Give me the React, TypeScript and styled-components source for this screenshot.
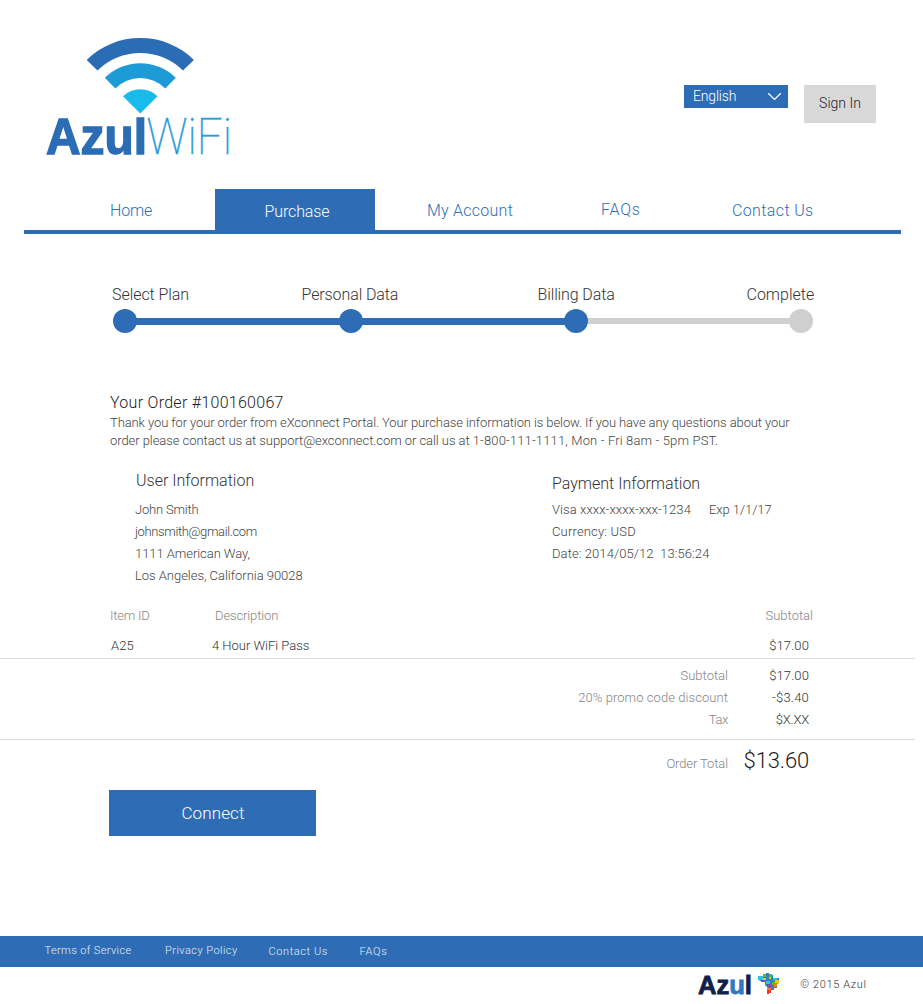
import React from 'react';
import styled, { createGlobalStyle } from 'styled-components';

const BLUE = '#2e6db5';
const GREY = '#cfcfcf';

const GlobalStyle = createGlobalStyle`
  * { box-sizing: border-box; }
  body {
    margin: 0;
    background: #fff;
    color: #333;
    font-family: Roboto, 'Liberation Sans', sans-serif;
    font-weight: 300;
  }
`;

/* Inline label: type size, tracking and tone vary from one use to the next. */
const Text = styled.span<{ $size?: number; $track?: number; $tone?: string }>`
  display: block;
  font-size: ${p => p.$size ?? 13}px;
  letter-spacing: ${p => p.$track ?? 0}px;
  color: ${p => p.$tone ?? 'inherit'};
  white-space: pre;
`;

const Page = styled.div`
  width: 923px;
  height: 1004px;
  display: flex;
  flex-direction: column;
  overflow: hidden;
`;

const Header = styled.header`
  height: 189px;
  padding: 33px 47px 0 42px;
  display: flex;
  justify-content: space-between;
  align-items: flex-start;
`;

const Actions = styled.div`
  display: flex;
  align-items: flex-start;
  gap: 16px;
  padding-top: 52px;
`;

const LanguageSelect = styled.button`
  width: 104px;
  height: 23px;
  padding: 0 6px 1px 9px;
  border: 0;
  display: flex;
  align-items: center;
  justify-content: space-between;
  background: ${BLUE};
  color: #fff;
  font: inherit;
`;

const SignIn = styled.button`
  width: 72px;
  height: 38px;
  padding: 0 0 2px;
  border: 0;
  display: flex;
  align-items: center;
  justify-content: center;
  background: #d8d8d8;
  color: #222;
  font: inherit;
`;

const Nav = styled.nav`
  width: 877px;
  height: 45px;
  margin-left: 24px;
  display: grid;
  grid-template-columns: 191px 160px 190px 112px 1fr;
  border-bottom: 4px solid ${BLUE};
`;

const NavItem = styled.a<{ $active?: boolean; $indent: number; $top?: number }>`
  padding: ${p => p.$top ?? 12}px 0 0 ${p => p.$indent}px;
  line-height: 20px;
  color: ${p => (p.$active ? '#fff' : BLUE)};
  background: ${p => (p.$active ? BLUE : 'transparent')};
`;

const Steps = styled.section`
  padding: 51px 0 0 112px;
`;

const StepLabels = styled.div`
  display: grid;
  grid-template-columns: 189.5px 236px 209px auto;
  line-height: 20px;
`;

const Track = styled.div`
  width: 700px;
  margin: 4px 0 0 1px;
  display: grid;
  grid-template-columns: 24px 202px 24px 201px 24px 201px 24px;
  align-items: center;
`;

const Dot = styled.i<{ $done?: boolean }>`
  position: relative;
  height: 24px;
  border-radius: 50%;
  background: ${p => (p.$done ? BLUE : GREY)};
`;

const Bar = styled.i<{ $done?: boolean }>`
  height: ${p => (p.$done ? 7 : 6)}px;
  margin: 0 -2px;
  background: ${p => (p.$done ? BLUE : GREY)};
`;

const Intro = styled.section`
  margin: 60px 0 0 110px;
  line-height: 18px;
`;

const IntroTitle = styled.h1`
  margin: 0 0 1px;
  font-weight: 300;
  line-height: 20px;
`;

const Info = styled.section`
  margin: 21px 0 0 135px;
  display: grid;
  grid-template-columns: 417px auto;
  align-items: start;
`;

const InfoBlock = styled.div<{ $top?: number }>`
  padding-top: ${p => p.$top ?? 0}px;
  line-height: 22px;
`;

const InfoTitle = styled.h2<{ $gap: number; $indent?: number }>`
  margin: 0 0 ${p => p.$gap}px ${p => p.$indent ?? 0}px;
  font-weight: 300;
  line-height: 20px;
`;

const SplitLine = styled.div<{ $gap?: number }>`
  display: flex;
  gap: ${p => p.$gap ?? 0}px;
`;

const ItemRow = styled.div<{ $left: number; $mid: number; $right: number }>`
  height: 22px;
  padding: 0 ${p => p.$right}px 0 ${p => p.$left}px;
  display: grid;
  grid-template-columns: ${p => p.$mid}px 1fr auto;
  line-height: 22px;
`;

const Items = styled.section`
  padding: 18px 0 1px;
  display: flex;
  flex-direction: column;
  gap: 8px;
`;

const Divider = styled.hr`
  width: 915px;
  height: 1px;
  margin: 0;
  border: 0;
  background: #dcdcdc;
`;

const Totals = styled.section<{ $pad: string }>`
  padding: ${p => p.$pad};
  display: grid;
  grid-template-columns: 728px 81px;
  justify-items: end;
  line-height: 22px;
`;

const GrandTotal = styled.strong`
  font-weight: 300;
  line-height: 16px;
`;

const Connect = styled.button`
  width: 207px;
  height: 46px;
  margin: 15px 0 0 109px;
  padding: 0 0 0 1px;
  border: 0;
  display: flex;
  align-items: center;
  justify-content: center;
  background: ${BLUE};
  color: #fff;
  font: inherit;
`;

const FooterBar = styled.footer`
  height: 31px;
  margin-top: auto;
  padding: 4px 0 0 44.5px;
  display: grid;
  grid-template-columns: 120.5px 103.5px 91px auto;
  line-height: 22px;
  background: ${BLUE};
  color: #e4edf7;
`;

const FooterLink = styled.a<{ $drop?: boolean }>`
  padding-top: ${p => (p.$drop ? 1 : 0)}px;
`;

const FooterBase = styled.div`
  height: 37px;
  padding-right: 56.5px;
  display: flex;
  justify-content: flex-end;
  gap: 18px;
`;

const Copyright = styled.small`
  padding-top: 7px;
  line-height: 22px;
  color: #333;
`;

const Svg = styled.svg`
  display: block;
  flex: none;
`;

const bold = { fontFamily: "'Liberation Sans', Arial, sans-serif", fontWeight: 700 } as const;

function AzulWifiLogo() {
  return (
    <Svg width="204" height="140" viewBox="42 33 204 140" role="img" aria-label="Azul WiFi">
      <path fill="#2b6db5" d="M86.7 60 A76 76 0 0 1 193.9 60 L183 70.4 A61 61 0 0 0 97.5 70.4 Z" />
      <path fill="#1c9bd7" d="M104.8 77.8 A50.3 50.3 0 0 1 175.8 77.8 L165.2 88.4 A35.3 35.3 0 0 0 115.4 88.4 Z" />
      <path fill="#18bbea" d="M123 96.2 A25 25 0 0 1 157.6 96.2 L140.3 113.6 Z" />
      <text x="46" y="154" fontSize="50" fill="#2b6db5" stroke="#2b6db5" strokeWidth="1.4" textLength="101" lengthAdjust="spacingAndGlyphs" {...bold}>Azul</text>
      <text x="146.5" y="154.3" fontSize="50" fill="#2a9ad8" stroke="#2a9ad8" strokeWidth="0.5" textLength="85.5" lengthAdjust="spacingAndGlyphs" fontFamily="Roboto, sans-serif" fontWeight="100">WiFi</text>
    </Svg>
  );
}

function AzulMark() {
  return (
    <Svg width="86" height="36" viewBox="695 967 86 36" role="img" aria-label="Azul">
      <text x="697" y="993.5" fontSize="25.5" fill="#10204a" stroke="#10204a" strokeWidth="0.8" textLength="54" lengthAdjust="spacingAndGlyphs" {...bold}>
        Az<tspan fill="#2f78c4" stroke="#2f78c4">u</tspan>l
      </text>
      <path fill="#2c7fc9" d="M757 976h5v-2h3v-1h3v2h4v3h6v5l-2 1v4h-3v2h-3v2l-3 1v-5l-3-3v-4h-5l-2-2z" />
      <path fill="#62b52d" d="M762 974h3v3h-3zM768 974h3v3h-3zM771 982h3v3h-3z" />
      <path fill="#35c0e8" d="M757 976h5v4h-5zM765 981h4v3h-4zM772 978h4v2h-4z" />
      <path fill="#f2c51d" d="M762 978h3v2h-3zM774 980h4v3h-4zM768 977h2v2h-2z" />
      <path fill="#7b4fa8" d="M760 980h4v2h-4zM766 984h4v3h-4z" />
      <path fill="#ef7d22" d="M773 983h3v4h-3zM766 988h4v2h-4z" />
      <path fill="#e63a2e" d="M766 990h4v3h-2v1h-2z" />
    </Svg>
  );
}

const LABEL = '#858585';
const BODY = '#444';

export default function App() {
  return (
    <Page>
      <GlobalStyle />
      <Header>
        <AzulWifiLogo />
        <Actions>
          <LanguageSelect>
            <Text $size={14} $track={-0.18}>English</Text>
            <Svg width="15" height="9" viewBox="0 0 15 9" fill="none" stroke="#fff" strokeWidth="1.3">
              <path d="M1.2 1.3 L7.5 7.4 L13.8 1.3" />
            </Svg>
          </LanguageSelect>
          <SignIn><Text $size={14}>Sign In</Text></SignIn>
        </Actions>
      </Header>

      <Nav>
        <NavItem $indent={86}><Text $size={16} $track={-0.2}>Home</Text></NavItem>
        <NavItem $active $indent={49.5} $top={13}><Text $size={16} $track={-0.12}>Purchase</Text></NavItem>
        <NavItem $indent={52}><Text $size={16} $track={0.25}>My Account</Text></NavItem>
        <NavItem $indent={36} $top={11}><Text $size={16} $track={0.8}>FAQs</Text></NavItem>
        <NavItem $indent={55}><Text $size={16} $track={0.38}>Contact Us</Text></NavItem>
      </Nav>

      <Steps>
        <StepLabels>
          <Text $size={16} $track={-0.06}>Select Plan</Text>
          <Text $size={16} $track={-0.1}>Personal Data</Text>
          <Text $size={16} $track={-0.12}>Billing Data</Text>
          <Text $size={16}>Complete</Text>
        </StepLabels>
        <Track>
          <Dot $done /><Bar $done /><Dot $done /><Bar $done /><Dot $done /><Bar /><Dot />
        </Track>
      </Steps>

      <Intro>
        <IntroTitle><Text $size={16} $track={0.28} $tone="#1c1c1c">Your Order #100160067</Text></IntroTitle>
        <Text $track={-0.1} $tone={BODY}>Thank you for your order from eXconnect Portal. Your purchase information is below. If you have any questions about your</Text>
        <SplitLine>
          <Text $track={-0.06} $tone={BODY}>{'order please contact us at support@exconnect.com or call us at '}</Text>
          <Text $track={0.15} $tone={BODY}>1-800-111-1111, Mon - Fri 8am - 5pm PST.</Text>
        </SplitLine>
      </Intro>

      <Info>
        <InfoBlock>
          <InfoTitle $gap={8} $indent={1}><Text $size={16}>User Information</Text></InfoTitle>
          <Text $track={-0.19} $tone={BODY}>John Smith</Text>
          <Text $track={-0.37} $tone={BODY}>johnsmith@gmail.com</Text>
          <Text $track={-0.06} $tone={BODY}>1111 American Way,</Text>
          <Text $track={-0.03} $tone={BODY}>Los Angeles, California 90028</Text>
        </InfoBlock>
        <InfoBlock $top={3}>
          <InfoTitle $gap={5}><Text $size={16}>Payment Information</Text></InfoTitle>
          <SplitLine $gap={18}>
            <Text $track={0.07} $tone={BODY}>Visa xxxx-xxxx-xxx-1234</Text>
            <Text $track={-0.06} $tone={BODY}>Exp 1/1/17</Text>
          </SplitLine>
          <Text $track={0.17} $tone={BODY}>Currency: USD</Text>
          <Text $track={0.08} $tone={BODY}>{'Date: 2014/05/12  13:56:24'}</Text>
        </InfoBlock>
      </Info>

      <Items>
        <ItemRow $left={110} $mid={105} $right={110}>
          <Text $track={-0.2} $tone={LABEL}>Item ID</Text>
          <Text $track={-0.12} $tone={LABEL}>Description</Text>
          <Text $tone={LABEL}>Subtotal</Text>
        </ItemRow>
        <ItemRow $left={111} $mid={101} $right={114}>
          <Text $track={0.04}>A25</Text>
          <Text $track={-0.02}>4 Hour WiFi Pass</Text>
          <Text $track={0.11}>$17.00</Text>
        </ItemRow>
      </Items>
      <Divider />
      <Totals $pad="6px 0 8px">
        <Text $tone={LABEL}>Subtotal</Text>
        <Text $track={0.11}>$17.00</Text>
        <Text $track={0.07} $tone={LABEL}>20% promo code discount</Text>
        <Text $track={0.21}>-$3.40</Text>
        <Text $track={-0.4} $tone={LABEL}>Tax</Text>
        <Text $track={-0.2}>$X.XX</Text>
      </Totals>
      <Divider />
      <Totals $pad="13px 0 0">
        <Text $track={-0.11} $tone={LABEL}>Order Total</Text>
        <GrandTotal><Text $size={22} $track={-0.15} $tone="#1c1c1c">$13.60</Text></GrandTotal>
      </Totals>

      <Connect><Text $size={17} $track={0.12}>Connect</Text></Connect>

      <FooterBar>
        <FooterLink><Text $size={11} $track={0.37}>Terms of Service</Text></FooterLink>
        <FooterLink><Text $size={11} $track={0.45}>Privacy Policy</Text></FooterLink>
        <FooterLink $drop><Text $size={11} $track={0.6}>Contact Us</Text></FooterLink>
        <FooterLink $drop><Text $size={11} $track={0.7}>FAQs</Text></FooterLink>
      </FooterBar>
      <FooterBase>
        <AzulMark />
        <Copyright><Text $size={11} $track={0.62}>© 2015 Azul</Text></Copyright>
      </FooterBase>
    </Page>
  );
}
